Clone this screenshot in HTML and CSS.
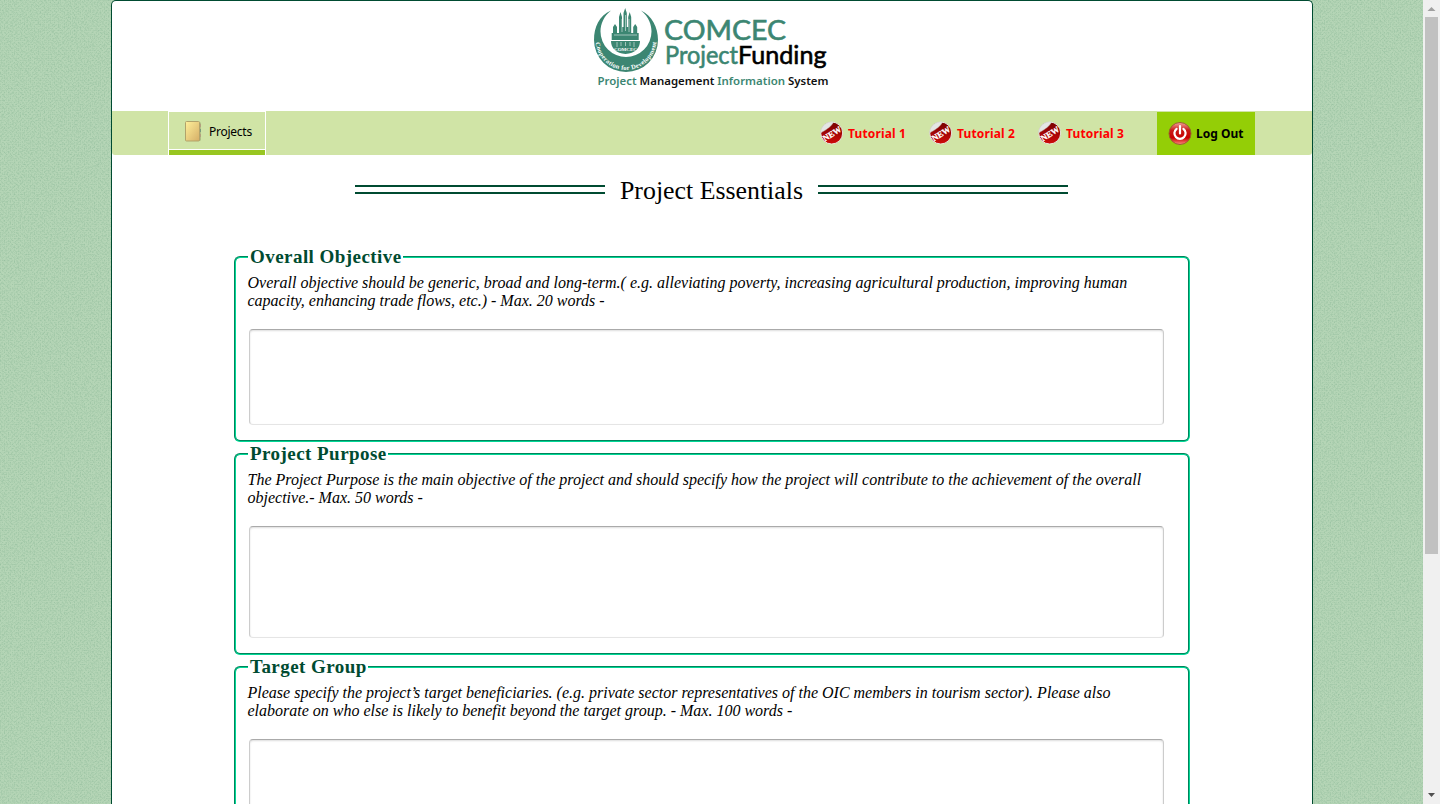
FILE: index.html
```html
<!DOCTYPE html>
<html lang="en">
<head>
<meta charset="utf-8">
<title>Project Essentials</title>
<link rel="stylesheet" href="styles.css">
</head>
<body>
<svg class="texture" width="1423" height="804" aria-hidden="true">
  <defs>
    <filter id="grain" x="0" y="0" width="100%" height="100%" color-interpolation-filters="sRGB">
      <feTurbulence type="fractalNoise" baseFrequency="0.7" numOctaves="2" seed="4"/>
      <feColorMatrix values="0 0 0 0 .54  0 0 0 0 .72  0 0 0 0 .59  1.2 0 0 0 -.5"/>
    </filter>
    <pattern id="weave" width="4" height="4" patternUnits="userSpaceOnUse"><path d="M0 0h1v1H0zM2 2h1v1H2z" fill="#8fbb98" opacity=".3"/></pattern>
  </defs>
  <rect width="1423" height="804" fill="#b5d5b6"/>
  <rect width="1423" height="804" fill="url(#weave)"/>
  <rect width="1423" height="804" filter="url(#grain)"/>
</svg>
<div class="screen">
  <div class="page">
    <header class="brand">
      <svg width="240" height="90" viewBox="590 4 240 90" role="img" aria-label="COMCEC Project Funding">
        <defs><path id="arc" d="M595.500 39.500A30.500 30.500 0 0 0 656.500 39.500"/></defs>
        <path fill="#3c8672" d="M611 10.500C599 16 594 27 594 40a32 32 0 0 0 64 0C658 27 652 16 641 10.500C649 17 651.500 25 651.500 31.500a25.500 25.500 0 0 1-51 0C600.500 24 604 16 611 10.500Z"/>
        <g fill="#3c8672">
          <path d="M619 33V17l1.500-5 1.500 5v10h1.500V13l1.700-5 1.600 5v14h1.400V17l1.500-5 1.500 5v16h2v-6l2-3 2 3v6h1.500v7h-27v-7h1.300v-6l2-3 2 3v6Z"/>
          <path d="M611 41h29c0 7-5 12.500-14.500 13C616 53.500 611 48 611 41Z"/>
        </g>
        <path d="M614 35h23M612 40.500h27M622 19v13M629 19v13M625.500 15v16M617 42v5M621 42v4M625.500 42v4M630 42v4M634 42v5" stroke="#fff" stroke-width=".7" fill="none" opacity=".75"/>
        <text class="mini" x="614" y="51" textLength="23" lengthAdjust="spacingAndGlyphs">COMCEC</text>
        <text class="motto"><textPath href="#arc" startOffset="3" textLength="90">Cooperation for Development</textPath></text>
        <text class="logo-a" x="664" y="39.500" textLength="122" lengthAdjust="spacingAndGlyphs">COMCEC</text>
        <text class="logo-b" x="665" y="63.500" textLength="73" lengthAdjust="spacingAndGlyphs">Project</text>
        <text class="logo-b strong" x="738" y="63.500" textLength="88.500" lengthAdjust="spacingAndGlyphs">Funding</text>
        <text class="logo-c" x="597.500" y="85" textLength="231" lengthAdjust="spacingAndGlyphs">Project <tspan class="ink">Management</tspan> Information <tspan class="ink">System</tspan></text>
      </svg>
    </header>
    <nav class="bar">
      <a class="tab"><svg width="17" height="21" viewBox="0 0 17 21"><defs><linearGradient id="book" x2="1" y2="1"><stop stop-color="#fff09a"/><stop offset="1" stop-color="#d5ae67"/></linearGradient></defs><path d="M14 1.500h1.500v18H14z" fill="#8f9a68"/><path d="M15 3v3M15 13v3" stroke="#b46" opacity=".5"/><path d="M15 8v3" stroke="#477"/><rect x=".5" y=".5" width="14" height="19.500" rx="1" fill="url(#book)" stroke="#b1a36b"/></svg><span class="tab-label">Projects</span></a>
      <div class="tutorials">
        <a class="tutorial"><svg width="24" height="24" viewBox="0 0 24 24"><defs><linearGradient id="red" x2="0" y2="1"><stop stop-color="#760000"/><stop offset="1" stop-color="#d00a0a"/></linearGradient></defs><circle cx="11.700" cy="12" r="11" fill="url(#red)" stroke="#e6ebe0" stroke-width="1"/><path d="M.5 12C1 5 6 .6 13.500 .8 12.500 4.500 7 8.500 .5 12Z" fill="#e4e6e4" stroke="#c4c9c0" stroke-width=".4"/><text class="new" transform="rotate(-32 12 12)" x="1.500" y="15.500" textLength="20.500" lengthAdjust="spacingAndGlyphs">NEW</text></svg><span>Tutorial 1</span></a>
        <a class="tutorial"><svg width="24" height="24" viewBox="0 0 24 24"><circle cx="11.700" cy="12" r="11" fill="url(#red)" stroke="#e6ebe0" stroke-width="1"/><path d="M.5 12C1 5 6 .6 13.500 .8 12.500 4.500 7 8.500 .5 12Z" fill="#e4e6e4" stroke="#c4c9c0" stroke-width=".4"/><text class="new" transform="rotate(-32 12 12)" x="1.500" y="15.500" textLength="20.500" lengthAdjust="spacingAndGlyphs">NEW</text></svg><span>Tutorial 2</span></a>
        <a class="tutorial"><svg width="24" height="24" viewBox="0 0 24 24"><circle cx="11.700" cy="12" r="11" fill="url(#red)" stroke="#e6ebe0" stroke-width="1"/><path d="M.5 12C1 5 6 .6 13.500 .8 12.500 4.500 7 8.500 .5 12Z" fill="#e4e6e4" stroke="#c4c9c0" stroke-width=".4"/><text class="new" transform="rotate(-32 12 12)" x="1.500" y="15.500" textLength="20.500" lengthAdjust="spacingAndGlyphs">NEW</text></svg><span>Tutorial 3</span></a>
      </div>
      <a class="logout"><svg width="24" height="24" viewBox="0 0 24 24"><defs><linearGradient id="pow" x2="0" y2="1"><stop stop-color="#f5a5a0"/><stop offset=".35" stop-color="#c91a16"/><stop offset=".7" stop-color="#c80000"/><stop offset="1" stop-color="#ff8d80"/></linearGradient></defs><circle cx="12" cy="11.500" r="11" fill="url(#pow)" stroke="#98602f"/><path d="M8.600 6.800a5.600 5.600 0 1 0 6.800 0M12 4v7.500" fill="none" stroke="#fff" stroke-width="2.200" stroke-linecap="round"/></svg><span>Log Out</span></a>
    </nav>
    <div class="heading"><span class="rule"></span><svg class="heading-text" width="183" height="34"><text x="0" y="24" textLength="183" lengthAdjust="spacingAndGlyphs">Project Essentials</text></svg><span class="rule"></span></div>
    <main class="form">
      <fieldset>
        <legend>Overall Objective</legend>
        <p>Overall objective should be generic, broad and long-term.( e.g. alleviating poverty, increasing agricultural production, improving human<br>capacity, enhancing trade flows, etc.) - Max. 20 words -</p>
        <textarea class="short"></textarea>
      </fieldset>
      <fieldset>
        <legend>Project Purpose</legend>
        <p>The Project Purpose is the main objective of the project and should specify how the project will contribute to the achievement of the overall<br>objective.- Max. 50 words -</p>
        <textarea class="tall"></textarea>
      </fieldset>
      <fieldset>
        <legend>Target Group</legend>
        <p>Please specify the project’s target beneficiaries. (e.g. private sector representatives of the OIC members in tourism sector). Please also<br>elaborate on who else is likely to benefit beyond the target group. - Max. 100 words -</p>
        <textarea class="tall"></textarea>
      </fieldset>
    </main>
  </div>
  <div class="scrollbar">
    <svg width="17" height="17"><path d="M4.500 11h8L8.500 7Z" fill="#a0a0a0"/></svg>
    <div class="thumb"></div>
    <svg width="17" height="17"><path d="M5 6h7L8.500 10Z" fill="#505050"/></svg>
  </div>
</div>
</body>
</html>
```
FILE: styles.css
```css
* { box-sizing: border-box; }
html { background: #b3d3b4; }
body { margin: 0; height: 804px; overflow: hidden; }
.texture { position: absolute; left: 0; top: 0; z-index: -1; }
.screen { display: flex; height: 804px; overflow: hidden; }
.page { width: 1202px; height: 804px; margin-left: 111px; flex: none; overflow: hidden; background: #fff; border: 1px solid #004b31; border-bottom: 0; border-radius: 5px 5px 0 0; }
.brand { height: 110px; padding: 3px 0 0 478px; }
.brand svg { display: block; }
.logo-a, .logo-b { font-family: Lato, sans-serif; fill: #3c8672; stroke: #3c8672; stroke-width: .6px; }
.logo-a { font-size: 27px; }
.logo-b { font-size: 25px; }
.logo-b.strong { fill: #000; stroke: #000; }
.logo-c { font: 600 11.5px "Noto Sans", sans-serif; fill: #3c8672; }
.logo-c .ink { fill: #111; }
.motto { font: bold 6.5px "Liberation Serif", serif; fill: #fff; }
.mini { font: bold 5px "Liberation Serif", serif; fill: #fff; }
.bar { display: flex; height: 44px; background: #d0e4a6; border-radius: 0 0 3px 3px; font-family: "Noto Sans", sans-serif; }
.tab { display: flex; align-items: center; width: 98px; height: 44px; margin-left: 56px; padding: 0 0 4px 16px; border: 1px solid #fff; border-bottom: 0; background: linear-gradient(#d0e4a6 37px, #fff 37px, #fff 38px, #98c621 38px); font-size: 12px; color: #000; }
.tab-label { margin-left: 7px; letter-spacing: -.25px; }
.tutorials { display: flex; gap: 22px; margin-left: 554px; align-items: center; }
.tutorial { display: flex; align-items: center; width: 87px; gap: 4px; font-size: 12px; font-weight: 700; letter-spacing: .15px; color: #f00; white-space: nowrap; }
.tutorial svg, .logout svg, .tab svg { flex: none; }
.new { font: bold 8.5px "Liberation Serif", serif; fill: #fff; stroke: #fff; stroke-width: .3px; }
.logout { display: flex; align-items: center; gap: 4px; width: 98px; height: 43px; margin: 1px 0 0 32px; padding-left: 11px; background: #94ce06; color: #000; font-size: 12px; font-weight: 700; }
.heading { display: flex; gap: 15px; height: 91px; padding: 20px 0 0 243px; }
.rule { width: 250px; height: 9px; margin-top: 10px; border-top: 2px solid #004b31; border-bottom: 2px solid #004b31; }
.heading-text { font: 25px "Palatino Linotype", Palatino, "URW Palladio L", "Liberation Serif", serif; overflow: visible; }
.form { display: flex; flex-direction: column; gap: 1px; width: 956px; margin-left: 122px; }
fieldset { margin: 0; padding: 6px 12px 15px; border: 2px groove #00d896; border-radius: 6px; min-width: 0; }
legend { height: 22px; padding: 0 1px 0 2px; font: bold 19px/22px "Liberation Serif", serif; letter-spacing: .45px; color: #004b31; white-space: nowrap; }
p { margin: 0 0 19px -.5px; font: italic 16px/18px "Liberation Serif", serif; color: #000; white-space: nowrap; }
textarea { display: block; width: 915px; margin-left: 1px; border: 1px solid #ccc; border-top-color: #aaa; border-bottom-color: #e5e5e5; border-radius: 4px; box-shadow: inset 0 1px 2px #ddd; resize: none; background: #fff; }
.short { height: 96px; }
.tall { height: 112px; }
.scrollbar { display: flex; flex-direction: column; width: 17px; height: 804px; margin-left: 110px; background: #f0f0f0; flex: none; }
.thumb { width: 13px; height: 537px; margin: 0 2px 233px; background: #c1c1c1; flex: none; }
.scrollbar svg { flex: none; }
```
